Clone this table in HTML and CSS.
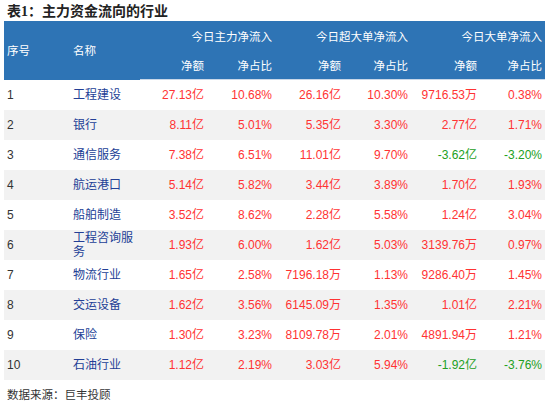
FILE: index.html
```html
<!DOCTYPE html>
<html lang="zh">
<head>
<meta charset="utf-8">
<link rel="stylesheet" href="styles.css">
</head>
<body>
<div class="page">
  <h1 class="title"><span class="num">表1</span>：主力资金流向的行业</h1>
  <table class="flow">
    <colgroup>
      <col class="c-idx"><col class="c-name"><col class="c-a"><col class="c-b"><col class="c-c"><col class="c-d"><col class="c-e"><col class="c-f">
    </colgroup>
    <thead>
      <tr class="h1">
        <th rowspan="2" class="l">序号</th>
        <th rowspan="2" class="l">名称</th>
        <th colspan="2">今日主力净流入</th>
        <th colspan="2">今日超大单净流入</th>
        <th colspan="2">今日大单净流入</th>
      </tr>
      <tr class="h2">
        <th>净额</th><th>净占比</th><th>净额</th><th>净占比</th><th>净额</th><th>净占比</th>
      </tr>
    </thead>
    <tbody>
      <tr><td class="idx">1</td><td class="name">工程建设</td><td class="up">27.13亿</td><td class="up">10.68%</td><td class="up">26.16亿</td><td class="up">10.30%</td><td class="up">9716.53万</td><td class="up">0.38%</td></tr>
      <tr><td class="idx">2</td><td class="name">银行</td><td class="up">8.11亿</td><td class="up">5.01%</td><td class="up">5.35亿</td><td class="up">3.30%</td><td class="up">2.77亿</td><td class="up">1.71%</td></tr>
      <tr><td class="idx">3</td><td class="name">通信服务</td><td class="up">7.38亿</td><td class="up">6.51%</td><td class="up">11.01亿</td><td class="up">9.70%</td><td class="down">-3.62亿</td><td class="down">-3.20%</td></tr>
      <tr><td class="idx">4</td><td class="name">航运港口</td><td class="up">5.14亿</td><td class="up">5.82%</td><td class="up">3.44亿</td><td class="up">3.89%</td><td class="up">1.70亿</td><td class="up">1.93%</td></tr>
      <tr><td class="idx">5</td><td class="name">船舶制造</td><td class="up">3.52亿</td><td class="up">8.62%</td><td class="up">2.28亿</td><td class="up">5.58%</td><td class="up">1.24亿</td><td class="up">3.04%</td></tr>
      <tr><td class="idx">6</td><td class="name">工程咨询服务</td><td class="up">1.93亿</td><td class="up">6.00%</td><td class="up">1.62亿</td><td class="up">5.03%</td><td class="up">3139.76万</td><td class="up">0.97%</td></tr>
      <tr><td class="idx">7</td><td class="name">物流行业</td><td class="up">1.65亿</td><td class="up">2.58%</td><td class="up">7196.18万</td><td class="up">1.13%</td><td class="up">9286.40万</td><td class="up">1.45%</td></tr>
      <tr><td class="idx">8</td><td class="name">交运设备</td><td class="up">1.62亿</td><td class="up">3.56%</td><td class="up">6145.09万</td><td class="up">1.35%</td><td class="up">1.01亿</td><td class="up">2.21%</td></tr>
      <tr><td class="idx">9</td><td class="name">保险</td><td class="up">1.30亿</td><td class="up">3.23%</td><td class="up">8109.78万</td><td class="up">2.01%</td><td class="up">4891.94万</td><td class="up">1.21%</td></tr>
      <tr><td class="idx">10</td><td class="name">石油行业</td><td class="up">1.12亿</td><td class="up">2.19%</td><td class="up">3.03亿</td><td class="up">5.94%</td><td class="down">-1.92亿</td><td class="down">-3.76%</td></tr>
    </tbody>
  </table>
  <p class="source">数据来源：巨丰投顾</p>
</div>
</body>
</html>
```

FILE: styles.css
```css
html, body {
  margin: 0;
  padding: 0;
  background: #ffffff;
}
.page {
  padding: 0 4px;
  font-family: "Liberation Sans", "Noto Sans CJK SC", sans-serif;
  font-size: 12px;
  color: #333333;
}
.title {
  margin: 0;
  padding: 3px 0 0 3px;
  height: 21px;
  box-sizing: border-box;
  font-family: "Liberation Serif", "Noto Sans CJK SC", serif;
  font-size: 14px;
  line-height: 18px;
  font-weight: 700;
  color: #222222;
}
.flow {
  width: 541px;
  border-collapse: collapse;
  table-layout: fixed;
}
.c-idx { width: 66px; }
.c-name { width: 70px; }
.c-a { width: 67px; }
.c-b { width: 68px; }
.c-c { width: 69px; }
.c-d { width: 67px; }
.c-e { width: 69px; }
.c-f { width: 65px; }
.flow th {
  background: #2e74b5;
  color: #ffffff;
  font-weight: 400;
  font-size: 11.5px;
  text-align: right;
  padding: 0 3px;
  height: 29px;
  white-space: nowrap;
}
.flow th.l {
  text-align: left;
}
.flow thead tr.h2 th {
  border-bottom: 1px solid #c9d7e8;
}
.flow td {
  height: 30px;
  padding: 0 3px;
  text-align: right;
  line-height: 14px;
  box-sizing: border-box;
}
.flow tbody tr:nth-child(even) td {
  background: #f2f2f2;
}
.flow td.idx {
  text-align: left;
  color: #333333;
}
.flow td.name {
  text-align: left;
  color: #233f96;
}
.flow td.up {
  color: #ff3333;
}
.flow td.down {
  color: #22a022;
}
.source {
  margin: 0;
  padding: 8px 0 0 3px;
  font-size: 11.5px;
  line-height: 14px;
  color: #333333;
}
```
